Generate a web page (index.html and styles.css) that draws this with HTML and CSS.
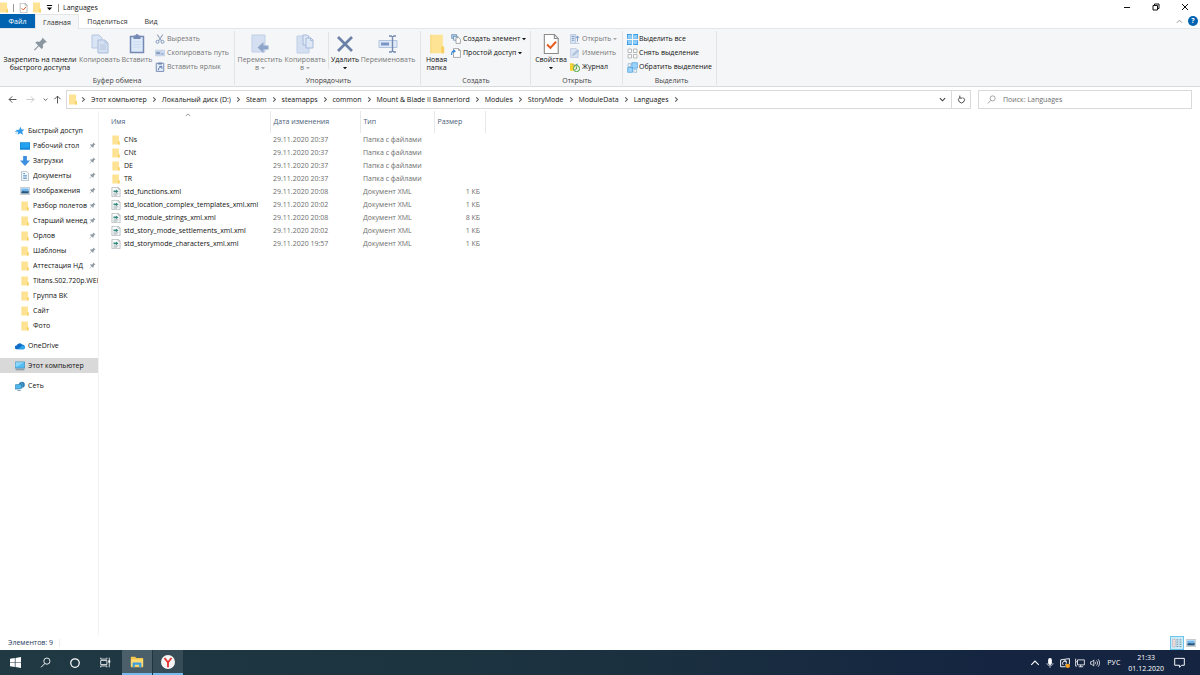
FILE: index.html
```html
<!DOCTYPE html>
<html lang="ru">
<head>
<meta charset="utf-8">
<title>Languages</title>
<link rel="stylesheet" href="styles.css">
</head>
<body>
<svg class="sprite" aria-hidden="true">
  <symbol id="folder" viewBox="0 0 9 12"><path d="M.5.500h7.500v7l.8.500v3.500H.5z" fill="#ffe394"/><path d="M7 8l1-1 .8 1v3.500H7z" fill="#f8cf62"/><path d="M.5.500h.6v11H.5z" fill="#f5d47c"/></symbol>
  <symbol id="pin" viewBox="0 0 16 16"><path d="M10 1l5 5-2 .4-2.500 2.500.2 3.100-1.500 1.300-3-3L2 15l-1-1 4.500-4.400-3-3L4 5.200l3.100.3L9.600 3z" fill="currentColor"/></symbol>
  <symbol id="xml" viewBox="0 0 16 16"><path d="M1.500.5h10l3 3v12h-13z" fill="#fbfcfc" stroke="#98a1a6"/><path d="M11.500.5v3h3" fill="none" stroke="#98a1a6"/><path d="M4 5.500h4V4l4 3-4 3V8.500H4z" fill="#35877f"/><path d="M4 11h8M4 13h6" fill="none" stroke="#7d8d95"/></symbol>
  <symbol id="chev" viewBox="0 0 8 8"><path d="M2.500 1.500L5 4 2.500 6.500" fill="none" stroke="currentColor" stroke-width="1.200"/></symbol>
  <symbol id="down" viewBox="0 0 8 8"><path d="M1 2.500l3 3 3-3" fill="none" stroke="currentColor" stroke-width="1.300"/></symbol>
  <symbol id="up" viewBox="0 0 8 8"><path d="M1 5.500l3-3 3 3" fill="none" stroke="currentColor" stroke-width="1"/></symbol>
  <symbol id="tri" viewBox="0 0 8 8"><path d="M0 2h8L4 6.500z" fill="currentColor"/></symbol>
  <symbol id="arrow" viewBox="0 0 16 16"><path d="M15 8H2M7.500 2.500L2 8l5.500 5.500" fill="none" stroke="currentColor" stroke-width="1.600"/></symbol>
  <symbol id="lens" viewBox="0 0 16 16"><circle cx="10" cy="6" r="4.500" fill="none" stroke="currentColor" stroke-width="1.300"/><path d="M7 9.500L1.500 15" stroke="currentColor" stroke-width="1.400"/></symbol>
  <symbol id="props" viewBox="0 0 14 18"><path d="M1 .5h9l3.500 3.500v13.500H1z" fill="#fff" stroke="#8c8c8c"/><path d="M10 .5V4h3.500" fill="none" stroke="#8c8c8c"/><path d="M3.500 9.500l3 3 5-5.500" fill="none" stroke="#e8591c" stroke-width="1.800"/></symbol>
  <symbol id="copy" viewBox="0 0 18 20"><path d="M1 1h7l3 3v10H1z" fill="#d9e4f4" stroke="#b4c6e2"/><path d="M7 6h7l3 3v10H7z" fill="#d4e0f2" stroke="#a9bddb"/><path d="M14 6v3h3M9 11h6M9 13h6M9 15h6" fill="none" stroke="#b4c6e2"/></symbol>
  <symbol id="clip" viewBox="0 0 16 20"><path d="M1.500 2.500h13v16h-13z" fill="#dce9f8" stroke="#7489b3" stroke-width="1.500"/><path d="M4.500 1.500h2a1.500 1.500 0 013 0h2V5h-7z" fill="#7489b3"/><path d="M4 8h8M4 10.500h8M4 13h8" stroke="#c5d6ec" stroke-width=".7"/></symbol>
  <symbol id="cut" viewBox="0 0 16 16"><path d="M3.500 1l7 10M12.500 1l-7 10" stroke="#9aa8c0" stroke-width="1.700"/><circle cx="4" cy="12.500" r="2.400" fill="none" stroke="#7e96bf" stroke-width="1.500"/><circle cx="12" cy="12.500" r="2.400" fill="none" stroke="#7e96bf" stroke-width="1.500"/></symbol>
  <symbol id="path" viewBox="0 0 16 16"><path d="M.5 3.500h15v9H.5z" fill="#cfdcf0" stroke="#b6c7e0"/><path d="M2 6l1.500 4L5 6l1.500 4L8 6M9 9.500h5" fill="none" stroke="#6c83aa" stroke-width="1.200"/></symbol>
  <symbol id="link" viewBox="0 0 16 16"><path d="M2 2h12v13H2z" fill="#e7effa" stroke="#7187b1" stroke-width="1.500"/><path d="M5 1h6v3H5z" fill="#7187b1"/><path d="M5.500 13c0-3 1-4.500 4-5M7 7h4v4" fill="none" stroke="#4f6fa8" stroke-width="1.500"/></symbol>
  <symbol id="move" viewBox="0 0 18 20"><path d="M1 1h13v17H1z" fill="#d4e0f2" stroke="#bfcfe7"/><path d="M17.500 11.500h-5V8L6.500 13.500l6 5.500v-3.500h5z" fill="#8fa6ca"/></symbol>
  <symbol id="copyto" viewBox="0 0 18 20"><path d="M1 2h12v17H1z" fill="#d4e0f2" stroke="#bfcfe7"/><path d="M7 1h4l2 2v8H7z" fill="#dfe8f6" stroke="#a6badb"/><path d="M10 4h5l2 2v8h-7z" fill="#dfe8f6" stroke="#a6badb"/><path d="M14.500 4v2.500H17" fill="none" stroke="#a6badb"/></symbol>
  <symbol id="delete" viewBox="0 0 18 20"><path d="M2 3l14 14M16 3L2 17" stroke="#6b80a8" stroke-width="2.700"/></symbol>
  <symbol id="rename" viewBox="0 0 20 20"><path d="M1 6.500h18v7H1z" fill="#e0eaf7" stroke="#b0c2de"/><path d="M3 8.500h8v3H3z" fill="#7995c5"/><path d="M11 2h2l1.500 1L16 2h2M14.500 3v14M11 18h2l1.500-1L16 18h2" fill="none" stroke="#7388b0" stroke-width="1.400"/></symbol>
  <symbol id="newitem" viewBox="0 0 16 16"><path d="M1 1h8v6H1z" fill="#a8d0f0" stroke="#597b9c"/><path d="M4 4h7v6H4z" fill="#e4eef7" stroke="#597b9c"/><path d="M8 6h4.500L15 8.500V15H8z" fill="#fff" stroke="#777"/></symbol>
  <symbol id="easy" viewBox="0 0 16 16"><path d="M4 1h8l3 3v11H4z" fill="#fff" stroke="#777"/><path d="M12 1v3h3" fill="none" stroke="#777"/><path d="M1 11c0-5 1-6 4-6" fill="none" stroke="#2b83d6" stroke-width="1.700"/><path d="M4 2l4 3-4 3z" fill="#2b83d6"/></symbol>
  <symbol id="open" viewBox="0 0 16 16"><path d="M1 1h8v14H1z" fill="#dce7f5" stroke="#9cb2d2"/><path d="M3 4h4M3 7h4M3 10h4" stroke="#7a96c1" stroke-width="1.500"/><path d="M12 12V4M9.500 6.500L12 3l2.500 3.500" fill="none" stroke="#7a96c1" stroke-width="1.500"/><path d="M9 15h6" stroke="#9cb2d2"/></symbol>
  <symbol id="edit" viewBox="0 0 16 16"><path d="M1 1h9l3 3v11H1z" fill="#dce7f5" stroke="#a8bad4"/><path d="M4 12l1-3 7-6 2 2-7 6z" fill="#b5c8e4" stroke="#90a8cc" stroke-width=".7"/></symbol>
  <symbol id="history" viewBox="0 0 16 16"><path d="M0 2h5l1 2h6v10H0z" fill="#f5d030"/><path d="M3 4l4 2 5-4v3z" fill="#3a93d2"/><circle cx="10.500" cy="10.500" r="5" fill="#e8f4e4" stroke="#4b9d44" stroke-width="1.500"/><path d="M10.500 7v4l-3 1" fill="none" stroke="#397e35" stroke-width="1.200"/></symbol>
  <symbol id="selall" viewBox="0 0 16 16"><path d="M0 0h7v7H0zM9 0h7v7H9zM0 9h7v7H0zM9 9h7v7H9z" fill="#2c8fdb"/><path d="M1 1h6v6H1zM9 1h6v6H9zM1 9h6v6H1zM9 9h6v6H9z" fill="#8fcdfb"/></symbol>
  <symbol id="selnone" viewBox="0 0 16 16"><path d="M1.500 1.500h5v5h-5zM9.500 1.500h5v5h-5zM1.500 9.500h5v5h-5zM9.500 9.500h5v5h-5z" fill="#fff" stroke="#9b9b9b"/></symbol>
  <symbol id="selinv" viewBox="0 0 16 16"><path d="M7 1h8v8H7zM1 8h7v7H1z" fill="#9bd3fb" stroke="#459fdf"/><path d="M1.500 2.500h4v4h-4zM10 11h4v4h-4z" fill="#fff" stroke="#7faac8"/></symbol>
  <symbol id="star" viewBox="0 0 16 16"><path d="M9 1l1.500 4.500H15L11.500 9l1.500 5-4.500-2.500L4 14l1.200-4L1 6.500l5.500-.7z" fill="#2f9be8"/><path d="M0 9l4-.5M1 12l3-2" stroke="#2f9be8"/></symbol>
  <symbol id="desk" viewBox="0 0 16 16"><path d="M0 2h16v12H0z" fill="#1787d9"/><path d="M1 3h14v8H1z" fill="#22a2ef"/></symbol>
  <symbol id="load" viewBox="0 0 16 16"><path d="M5 0h6v7h5L8 16 0 7h5z" fill="#3c8ede"/></symbol>
  <symbol id="doc" viewBox="0 0 16 16"><path d="M2.500.5h8l3 3v12h-11z" fill="#f9fbfd" stroke="#8c9dac"/><path d="M5 4h3M5 7h6M5 9.500h6M5 12h6" stroke="#5b96c4" stroke-width="1.400"/></symbol>
  <symbol id="pic" viewBox="0 0 16 16"><path d="M.5 2.500h15v11H.5z" fill="#fff" stroke="#9da6ac"/><path d="M2 4h12v5H2z" fill="#6fb5ed"/><path d="M2 9c4-3 6 1 12-1v4H2z" fill="#25577e"/></symbol>
  <symbol id="cloud" viewBox="0 0 16 16"><path d="M3 13a3 3 0 01-.5-6A5 5 0 0111 5.500 4 4 0 0113.500 13z" fill="#0f6cc8"/><path d="M5 13l6-5.500c3-1 5 .5 5 2.800 0 2-1 2.700-2.500 2.700z" fill="#2fa4ec"/></symbol>
  <symbol id="pc" viewBox="0 0 16 16"><path d="M.5 1.500h15v10H.5z" fill="#54bdf4" stroke="#387fa8"/><path d="M1 2h14L1 10z" fill="#8bd7fa"/><path d="M1 14h14" stroke="#77858e" stroke-width="1.500"/></symbol>
  <symbol id="net" viewBox="0 0 16 16"><circle cx="11" cy="6" r="4.700" fill="#347fae"/><path d="M9 2c3 2 3 6 1 9" fill="none" stroke="#8cd0ed"/><path d="M.5 6l10-1v7l-10 1z" fill="#51b8ee" stroke="#2879a8"/><path d="M4 15h5" stroke="#4c7895" stroke-width="1.300"/></symbol>
</svg>

<header class="titlebar">
  <div class="quick">
    <svg class="i-folder"><use href="#folder"/></svg><span class="bar"></span>
    <button aria-label="Свойства"><svg class="i-props-s"><use href="#props"/></svg></button>
    <button aria-label="Новая папка"><svg class="i-folder"><use href="#folder"/></svg></button>
    <button aria-label="Настройка панели"><svg class="i-custom" viewBox="0 0 8 8"><path d="M1 1h6v1.200H1zM1 4h6L4 7z"/></svg></button><span class="bar"></span>
  </div>
  <h1>Languages</h1>
  <div class="wincontrols">
    <button aria-label="Свернуть"><svg viewBox="0 0 8 8"><path d="M1 4.500h6"/></svg></button>
    <button aria-label="Восстановить"><svg viewBox="0 0 8 8"><path d="M1 2.500h4.500V7H1zM2.500 2.500V1H7v4.500H5.500"/></svg></button>
    <button aria-label="Закрыть"><svg viewBox="0 0 8 8"><path d="M1 1l6 6M7 1L1 7"/></svg></button>
  </div>
</header>

<nav class="tabs">
  <button class="file">Файл</button>
  <button class="active">Главная</button>
  <button class="share">Поделиться</button>
  <button class="view">Вид</button>
  <div class="tabs-end">
    <button aria-label="Свернуть ленту"><svg class="i8"><use href="#up"/></svg></button>
    <button class="help" aria-label="Справка">?</button>
  </div>
</nav>

<section class="ribbon">
  <div class="group g-clip">
    <div class="tools">
      <button class="big w-pin"><svg class="pin-big"><use href="#pin"/></svg><span>Закрепить на панели<br>быстрого доступа</span></button>
      <button class="big off w-copy"><svg><use href="#copy"/></svg><span>Копировать</span></button>
      <button class="big off w-paste"><svg><use href="#clip"/></svg><span>Вставить</span></button>
      <div class="stack">
        <button class="off"><svg><use href="#cut"/></svg>Вырезать</button>
        <button class="off"><svg><use href="#path"/></svg>Скопировать путь</button>
        <button class="off"><svg><use href="#link"/></svg>Вставить ярлык</button>
      </div>
    </div>
    <h2>Буфер обмена</h2>
  </div>
  <div class="group g-org">
    <div class="tools">
      <button class="big off w-move"><svg><use href="#move"/></svg><span>Переместить<br>в <svg class="caret"><use href="#tri"/></svg></span></button>
      <button class="big off w-copyto"><svg><use href="#copyto"/></svg><span>Копировать<br>в <svg class="caret"><use href="#tri"/></svg></span></button>
      <span class="split"></span>
      <button class="big w-del"><svg><use href="#delete"/></svg><span>Удалить<br><svg class="caret"><use href="#tri"/></svg></span></button>
      <button class="big off w-ren"><svg><use href="#rename"/></svg><span>Переименовать</span></button>
    </div>
    <h2>Упорядочить</h2>
  </div>
  <div class="group g-new">
    <div class="tools">
      <button class="big w-new"><svg><use href="#folder"/></svg><span>Новая<br>папка</span></button>
      <div class="stack">
        <button><svg><use href="#newitem"/></svg>Создать элемент<svg class="caret"><use href="#tri"/></svg></button>
        <button><svg><use href="#easy"/></svg>Простой доступ<svg class="caret"><use href="#tri"/></svg></button>
      </div>
    </div>
    <h2>Создать</h2>
  </div>
  <div class="group g-open">
    <div class="tools">
      <button class="big w-props"><svg><use href="#props"/></svg><span>Свойства<br><svg class="caret"><use href="#tri"/></svg></span></button>
      <div class="stack">
        <button class="off"><svg><use href="#open"/></svg>Открыть<svg class="caret"><use href="#tri"/></svg></button>
        <button class="off"><svg><use href="#edit"/></svg>Изменить</button>
        <button><svg><use href="#history"/></svg>Журнал</button>
      </div>
    </div>
    <h2>Открыть</h2>
  </div>
  <div class="group g-sel">
    <div class="tools">
      <div class="stack">
        <button><svg><use href="#selall"/></svg>Выделить все</button>
        <button><svg><use href="#selnone"/></svg>Снять выделение</button>
        <button><svg><use href="#selinv"/></svg>Обратить выделение</button>
      </div>
    </div>
    <h2>Выделить</h2>
  </div>
</section>

<div class="location">
  <div class="history">
    <button aria-label="Назад"><svg class="i9"><use href="#arrow"/></svg></button>
    <button class="dim" aria-label="Вперед"><svg class="i9 flip"><use href="#arrow"/></svg></button>
    <button class="recent" aria-label="Последние"><svg class="i6"><use href="#down"/></svg></button>
    <button class="upward" aria-label="Вверх"><svg class="i9 turn"><use href="#arrow"/></svg></button>
  </div>
  <div class="address">
    <svg class="i-folder"><use href="#folder"/></svg>
    <svg class="sep"><use href="#chev"/></svg><a href="#">Этот компьютер</a>
    <svg class="sep"><use href="#chev"/></svg><a href="#">Локальный диск (D:)</a>
    <svg class="sep"><use href="#chev"/></svg><a href="#">Steam</a>
    <svg class="sep"><use href="#chev"/></svg><a href="#">steamapps</a>
    <svg class="sep"><use href="#chev"/></svg><a href="#">common</a>
    <svg class="sep"><use href="#chev"/></svg><a href="#">Mount &amp; Blade II Bannerlord</a>
    <svg class="sep"><use href="#chev"/></svg><a href="#">Modules</a>
    <svg class="sep"><use href="#chev"/></svg><a href="#">StoryMode</a>
    <svg class="sep"><use href="#chev"/></svg><a href="#">ModuleData</a>
    <svg class="sep"><use href="#chev"/></svg><a href="#">Languages</a>
    <svg class="sep"><use href="#chev"/></svg>
    <button class="drop" aria-label="Предыдущие расположения"><svg class="i8"><use href="#down"/></svg></button>
    <button class="refresh" aria-label="Обновить"><svg class="i9" viewBox="0 0 16 16"><path d="M5 4.500a5.200 5.200 0 106 0M5 1v4.500h4.500" fill="none" stroke="currentColor" stroke-width="1.700"/></svg></button>
  </div>
  <label class="search"><svg class="i9"><use href="#lens"/></svg><input type="search" placeholder="Поиск: Languages" aria-label="Поиск"></label>
</div>

<main class="content">
  <nav class="sidebar">
    <a class="root" href="#"><svg><use href="#star"/></svg><span>Быстрый доступ</span></a>
    <a href="#"><svg><use href="#desk"/></svg><span>Рабочий стол</span><svg class="pin"><use href="#pin"/></svg></a>
    <a href="#"><svg><use href="#load"/></svg><span>Загрузки</span><svg class="pin"><use href="#pin"/></svg></a>
    <a href="#"><svg><use href="#doc"/></svg><span>Документы</span><svg class="pin"><use href="#pin"/></svg></a>
    <a href="#"><svg><use href="#pic"/></svg><span>Изображения</span><svg class="pin"><use href="#pin"/></svg></a>
    <a href="#"><svg><use href="#folder"/></svg><span>Разбор полетов</span><svg class="pin"><use href="#pin"/></svg></a>
    <a href="#"><svg><use href="#folder"/></svg><span>Старший менед</span><svg class="pin"><use href="#pin"/></svg></a>
    <a href="#"><svg><use href="#folder"/></svg><span>Орлов</span><svg class="pin"><use href="#pin"/></svg></a>
    <a href="#"><svg><use href="#folder"/></svg><span>Шаблоны</span><svg class="pin"><use href="#pin"/></svg></a>
    <a href="#"><svg><use href="#folder"/></svg><span>Аттестация НД</span><svg class="pin"><use href="#pin"/></svg></a>
    <a href="#"><svg><use href="#folder"/></svg><span>Titans.S02.720p.WEB</span></a>
    <a href="#"><svg><use href="#folder"/></svg><span>Группа ВК</span></a>
    <a href="#"><svg><use href="#folder"/></svg><span>Сайт</span></a>
    <a href="#"><svg><use href="#folder"/></svg><span>Фото</span></a>
    <a class="root gap" href="#"><svg><use href="#cloud"/></svg><span>OneDrive</span></a>
    <a class="root gap selected" href="#"><svg><use href="#pc"/></svg><span>Этот компьютер</span></a>
    <a class="root gap" href="#"><svg><use href="#net"/></svg><span>Сеть</span></a>
  </nav>
  <div class="files">
    <table>
      <colgroup><col class="c-name"><col class="c-date"><col class="c-type"><col class="c-size"></colgroup>
      <thead><tr><th>Имя<svg class="sort"><use href="#up"/></svg></th><th>Дата изменения</th><th>Тип</th><th>Размер</th></tr></thead>
      <tbody>
        <tr><td><svg><use href="#folder"/></svg>CNs</td><td>29.11.2020 20:37</td><td>Папка с файлами</td><td></td></tr>
        <tr><td><svg><use href="#folder"/></svg>CNt</td><td>29.11.2020 20:37</td><td>Папка с файлами</td><td></td></tr>
        <tr><td><svg><use href="#folder"/></svg>DE</td><td>29.11.2020 20:37</td><td>Папка с файлами</td><td></td></tr>
        <tr><td><svg><use href="#folder"/></svg>TR</td><td>29.11.2020 20:37</td><td>Папка с файлами</td><td></td></tr>
        <tr><td><svg><use href="#xml"/></svg>std_functions.xml</td><td>29.11.2020 20:08</td><td>Документ XML</td><td>1 КБ</td></tr>
        <tr><td><svg><use href="#xml"/></svg>std_location_complex_templates_xml.xml</td><td>29.11.2020 20:02</td><td>Документ XML</td><td>1 КБ</td></tr>
        <tr><td><svg><use href="#xml"/></svg>std_module_strings_xml.xml</td><td>29.11.2020 20:08</td><td>Документ XML</td><td>8 КБ</td></tr>
        <tr><td><svg><use href="#xml"/></svg>std_story_mode_settlements_xml.xml</td><td>29.11.2020 20:02</td><td>Документ XML</td><td>1 КБ</td></tr>
        <tr><td><svg><use href="#xml"/></svg>std_storymode_characters_xml.xml</td><td>29.11.2020 19:57</td><td>Документ XML</td><td>1 КБ</td></tr>
      </tbody>
    </table>
  </div>
</main>

<footer class="status">
  <span class="count">Элементов: 9</span>
  <div class="modes">
    <button class="on" aria-label="Таблица"><svg viewBox="0 0 16 16"><path d="M1 2h4v12H1z" fill="#fff" stroke="#b1a0a0"/><path d="M2 5h2M2 8h2M2 11h2" stroke="#d77c70"/><path d="M7 3h3M12 3h3M7 6.500h3M12 6.500h3M7 10h3M12 10h3M7 13.500h3M12 13.500h3" stroke="#6a7a85" stroke-width="1.300"/></svg></button>
    <button aria-label="Крупные значки"><svg><use href="#pic"/></svg></button>
  </div>
</footer>

<div class="taskbar">
  <button aria-label="Пуск"><svg class="win" viewBox="0 0 16 16"><path d="M0 2.500l7-1v6H0zM8 1.300L16 0v7.500H8zM0 8.500h7v6l-7-1zM8 8.500h8V16l-8-1.300z" fill="#fff"/></svg></button>
  <button aria-label="Поиск"><svg class="win"><use href="#lens"/></svg></button>
  <button aria-label="Кортана"><svg viewBox="0 0 16 16"><circle cx="8" cy="8" r="6.800" fill="none" stroke="#fff" stroke-width="2"/></svg></button>
  <button aria-label="Представление задач"><svg class="win" viewBox="0 0 16 16"><path d="M1 5h9v6H1zM1 1v2h9V1M1 15v-2h9v2M13.500 1v14" fill="none" stroke="#fff" stroke-width="1.200"/><path d="M12 5h3v3h-3z" fill="#fff"/></svg></button>
  <button class="run first" aria-label="Проводник"><svg class="app" viewBox="0 0 16 16"><path d="M1 2h5l1 1.500h8V14H1z" fill="#f6c64c"/><path d="M1 5h14v8H1z" fill="#ffdc73"/><path d="M3 14V8.500h10V14h-2.500v-3h-5v3z" fill="#3c9de2"/></svg></button>
  <button class="run" aria-label="Яндекс Браузер"><svg class="app" viewBox="0 0 16 16"><circle cx="8" cy="8" r="8" fill="#f5f5f5"/><path d="M4 3.500l4 5 4-5M8 8.500V14" fill="none" stroke="#e52b2b" stroke-width="2"/></svg></button>
  <div class="tray">
    <svg viewBox="0 0 16 16"><path d="M2 11l6-6 6 6" fill="none" stroke="#fff" stroke-width="1.700"/></svg>
    <svg viewBox="0 0 16 16"><rect x="5" y="0" width="6" height="11" rx="3" fill="#fff"/><path d="M3 8c0 6 10 6 10 0M8 12v4" fill="none" stroke="#bcc2cc" stroke-width="1.300"/></svg>
    <svg viewBox="0 0 16 16"><path d="M1 3l14-2v9M1 3v11h8M5 11a4 4 0 015-6M6 5h4v4M8 11h3" fill="none" stroke="#fff" stroke-width="1.500"/><circle cx="12.500" cy="12.500" r="3.500" fill="#f9a11b"/></svg>
    <svg viewBox="0 0 16 16"><path d="M4 3h11v8H4zM9 11v3M6 14h7M1 1v5h3M1 6v7h2" fill="none" stroke="#fff" stroke-width="1.300"/></svg>
    <svg viewBox="0 0 16 16"><path d="M1 6h2l3-3v10l-3-3H1zM8 6c1 1 1 3 0 4M10.500 4c2 2 2 6 0 8M13 2c3 3 3 9 0 12" fill="none" stroke="#fff" stroke-width="1.200"/></svg>
    <span class="lang">РУС</span>
    <time class="clock" datetime="2020-12-01T21:33">21:33<br>01.12.2020</time>
    <svg class="note" viewBox="0 0 16 16"><path d="M1 2h14v10h-4l-3 3v-3H1z" fill="none" stroke="#fff" stroke-width="1.400"/></svg>
  </div>
</div>
</body>
</html>
```
FILE: styles.css
```css
* { box-sizing: border-box; }
body {
  margin: 0;
  min-height: 100vh;
  display: flex;
  flex-direction: column;
  background: #fff;
  color: #111;
  font: 7px/8px "Open Sans", "Noto Sans", sans-serif;
  white-space: nowrap;
}
button {
  display: flex;
  align-items: center;
  justify-content: center;
  padding: 0;
  border: 0;
  background: none;
  color: inherit;
  font: inherit;
}
a { color: inherit; text-decoration: none; }
h1, h2 { margin: 0; font: inherit; }
svg { display: block; flex: none; width: 10px; height: 10px; }
.sprite { position: absolute; width: 0; height: 0; }
.i-folder { width: 9px; height: 11px; }
.i9 { width: 9px; height: 9px; }
.i8 { width: 7px; height: 7px; }
.i6 { width: 5px; height: 5px; }

/* Title bar */
.titlebar { display: flex; align-items: center; height: 14px; }
.quick { display: flex; align-items: center; gap: 5px; padding: 1px 4px 0 0; }
.quick .i-folder { width: 8px; }
.bar { width: 1px; height: 8px; background: #999; }
.i-props-s { width: 9px; height: 10px; }
.i-custom { width: 7px; height: 7px; }
.titlebar h1 { padding-top: 1px; }
.wincontrols { display: flex; margin-left: auto; padding-right: 1px; }
.wincontrols button { width: 29px; height: 13px; }
.wincontrols svg { width: 8px; height: 8px; fill: none; stroke: #111; stroke-width: 1; }

/* Tabs */
.tabs { display: flex; height: 15px; border-bottom: 1px solid #e4e5e6; color: #333; }
.tabs > button { padding-top: 1px; }
.tabs .file { width: 35px; background: #0063b1; color: #fff; }
.tabs .active { width: 44px; margin-bottom: -1px; background: #f5f6f7; border: 1px solid #e4e5e6; border-bottom: 0; }
.tabs .share { width: 57px; }
.tabs .view { width: 30px; }
.tabs-end { display: flex; align-items: center; gap: 5px; margin-left: auto; padding-right: 2px; color: #888; }
.tabs-end .help { width: 10px; height: 10px; border-radius: 50%; background: #0063b1; color: #fff; font-weight: 700; }

/* Ribbon */
.ribbon { display: flex; height: 58px; background: #f5f6f7; border-bottom: 1px solid #dadbdc; }
.group { display: flex; flex-direction: column; margin: 2px 0 1px; border-right: 1px solid #e2e3e4; }
.g-clip { width: 235px; }
.g-org { width: 186px; padding-left: 2px; }
.g-new { width: 110px; padding-left: 1px; }
.g-open { width: 92px; padding-left: 1px; }
.g-sel { width: 94px; padding-left: 4px; }
.tools { display: flex; flex: 1; padding-top: 1px; }
.group h2 { text-align: center; color: #444; }
.big { flex-direction: column; justify-content: flex-start; gap: 2px; padding-top: 2px; }
.big > svg { width: 20px; height: 20px; }
.big > .pin-big { width: 15px; height: 20px; color: #8a96a0; }
.off { color: #777; }
.off .caret { color: #aaa; }
.w-pin { width: 80px; }
.w-copy { width: 39px; }
.w-paste { width: 36px; }
.w-move { width: 46px; }
.w-copyto { width: 44px; }
.w-del { width: 32px; }
.w-ren { width: 54px; }
.w-new { width: 29px; }
.w-props { width: 38px; }
.split { width: 1px; margin: 0 0 8px 1px; background: #e2e3e4; }
.caret { width: 4px; height: 4px; }
.big .caret { display: inline-block; vertical-align: middle; }
.stack { display: flex; flex-direction: column; }
.stack button { justify-content: flex-start; gap: 2px; height: 14px; }
.g-sel svg { width: 11px; height: 11px; }
.g-sel .stack button { gap: 1px; }

/* Location row */
.location { display: flex; align-items: center; padding: 3px 8px 2px 3px; }
.history { display: flex; align-items: center; width: 63px; color: #444; }
.history button { width: 18px; }
.history .dim { color: #c4c4c4; }
.history .recent { width: 12px; }
.history .upward { width: 13px; }
.flip { transform: rotate(180deg); }
.turn { transform: rotate(90deg); }
.address { display: flex; flex: 1; align-items: center; height: 19px; padding-left: 2px; border: 1px solid #d9d9d9; }
.sep { width: 7px; height: 7px; margin: 0 4px; color: #555; }
.address .i-folder { width: 8px; margin-right: -1px; }
.drop { width: 18px; height: 17px; margin-left: auto; color: #444; }
.refresh { width: 19px; height: 17px; border-left: 1px solid #d9d9d9; color: #444; }
.search { display: flex; align-items: center; gap: 7px; width: 214px; height: 19px; margin-left: 7px; padding-left: 8px; border: 1px solid #d9d9d9; color: #888; }
.search input { flex: 1; min-width: 0; padding: 0; border: 0; outline: 0; background: none; color: #555; font: inherit; }
.search input::placeholder { color: #6d6d6d; opacity: 1; }

/* Content */
.content { display: flex; flex: 1; }
.sidebar { width: 99px; padding-top: 12px; border-right: 1px solid #f2f2f2; }
.sidebar a { display: flex; align-items: center; gap: 3px; height: 15px; padding-left: 20px; }
.sidebar a.root { padding-left: 15px; }
.sidebar a.gap { margin-top: 5px; }
.sidebar .selected { background: #d9d9d9; }
.sidebar span { flex: 1; min-width: 0; overflow: hidden; }
.sidebar .pin { width: 7px; height: 7px; margin: 0 2px 0 -3px; color: #8f9aa3; }
.files { flex: 1; padding-left: 1px; }
table { width: 385px; table-layout: fixed; border-collapse: collapse; }
.c-name { width: 170px; }
.c-date { width: 90px; }
.c-type { width: 74px; }
.c-size { width: 51px; }
th { position: relative; height: 22px; padding: 0 0 0 3px; border-right: 1px solid #e8e8e8; color: #4c607a; font-weight: 400; text-align: left; }
th:first-child { padding-left: 11px; }
.sort { position: absolute; top: 1px; left: 50%; width: 6px; height: 6px; color: #777; }
td { height: 13px; padding: 0 0 0 3px; color: #6d6d6d; }
td:first-child { display: flex; align-items: center; gap: 3px; padding-left: 11px; color: #111; }
td:last-child { padding-right: 5px; text-align: right; }

/* Status row */
.status { display: flex; align-items: center; height: 15px; color: #1e395b; }
.count { padding: 0 6px 0 8px; border-right: 1px solid #eee; }
.modes { display: flex; margin-left: auto; padding-right: 2px; }
.modes button { width: 14px; height: 14px; }
.modes .on { border: 1px solid #6cc5ea; background: #cbebf9; }
.modes svg { width: 10px; height: 10px; }

/* Taskbar */
.taskbar { display: flex; height: 25px; padding-right: 15px; background: linear-gradient(90deg, #203943, #1b313f 50%, #142441 85%); color: #fff; }
.taskbar > button { width: 30px; }
.taskbar .win { width: 11px; height: 11px; }
.taskbar .run { width: 30px; margin-left: 1px; border-bottom: 2px solid #76b9ed; background: #364d58; }
.taskbar .first { margin-left: 2px; background: #4a5f6a; }
.taskbar .app { width: 14px; height: 14px; }
.tray { display: flex; align-items: center; gap: 5px; margin-left: auto; text-align: center; }
.lang { padding-left: 2px; }
.clock { padding: 0 5px 0 3px; line-height: 11px; }
.note { width: 11px; height: 11px; }
```
